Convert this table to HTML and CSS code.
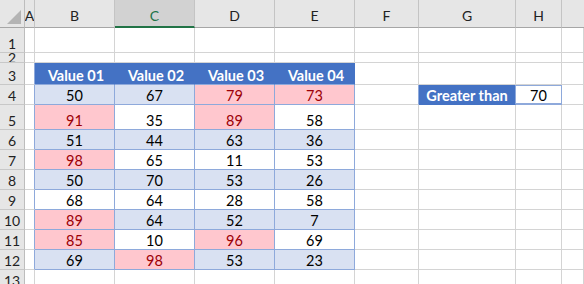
FILE: index.html
```html
<!DOCTYPE html>
<html lang="en">
<head>
  <meta charset="UTF-8" />
  <title>Greater than</title>
  <link rel="stylesheet" href="styles.css">
</head>
<body>
  <div class="sheet">
    <!-- column headers -->
    <div class="corner"><span class="tri"></span></div>
    <div class="ch">A</div>
    <div class="ch">B</div>
    <div class="ch sel">C</div>
    <div class="ch">D</div>
    <div class="ch">E</div>
    <div class="ch">F</div>
    <div class="ch">G</div>
    <div class="ch">H</div>
    <div class="ch last"></div>

    <!-- 1 -->
    <div class="rh">1</div>
    <div class="c"></div><div class="c"></div><div class="c"></div><div class="c"></div>
    <div class="c"></div><div class="c"></div><div class="c"></div><div class="c"></div><div class="c"></div>

    <!-- 2 -->
    <div class="rh short">2</div>
    <div class="c"></div><div class="c"></div><div class="c"></div><div class="c"></div>
    <div class="c"></div><div class="c"></div><div class="c"></div><div class="c"></div><div class="c"></div>

    <!-- 3 -->
    <div class="rh">3</div>
    <div class="c edge"></div>
    <div class="c th">Value 01</div>
    <div class="c th">Value 02</div>
    <div class="c th">Value 03</div>
    <div class="c th">Value 04</div>
    <div class="c"></div><div class="c"></div><div class="c"></div><div class="c"></div>

    <!-- 4 -->
    <div class="rh">4</div>
    <div class="c edge"></div>
    <div class="c td band">50</div>
    <div class="c td band">67</div>
    <div class="c td hi">79</div>
    <div class="c td hi">73</div>
    <div class="c pre"></div>
    <div class="c th lbl">Greater than</div>
    <div class="c td crit">70</div>
    <div class="c"></div>

    <!-- 5 -->
    <div class="rh">5</div>
    <div class="c edge"></div>
    <div class="c td hi">91</div>
    <div class="c td">35</div>
    <div class="c td hi">89</div>
    <div class="c td">58</div>
    <div class="c"></div><div class="c"></div><div class="c"></div><div class="c"></div>

    <!-- 6 -->
    <div class="rh">6</div>
    <div class="c edge"></div>
    <div class="c td band">51</div>
    <div class="c td band">44</div>
    <div class="c td band">63</div>
    <div class="c td band">36</div>
    <div class="c"></div><div class="c"></div><div class="c"></div><div class="c"></div>

    <!-- 7 -->
    <div class="rh">7</div>
    <div class="c edge"></div>
    <div class="c td hi">98</div>
    <div class="c td">65</div>
    <div class="c td">11</div>
    <div class="c td">53</div>
    <div class="c"></div><div class="c"></div><div class="c"></div><div class="c"></div>

    <!-- 8 -->
    <div class="rh">8</div>
    <div class="c edge"></div>
    <div class="c td band">50</div>
    <div class="c td band">70</div>
    <div class="c td band">53</div>
    <div class="c td band">26</div>
    <div class="c"></div><div class="c"></div><div class="c"></div><div class="c"></div>

    <!-- 9 -->
    <div class="rh">9</div>
    <div class="c edge"></div>
    <div class="c td">68</div>
    <div class="c td">64</div>
    <div class="c td">28</div>
    <div class="c td">58</div>
    <div class="c"></div><div class="c"></div><div class="c"></div><div class="c"></div>

    <!-- 10 -->
    <div class="rh">10</div>
    <div class="c edge"></div>
    <div class="c td hi">89</div>
    <div class="c td band">64</div>
    <div class="c td band">52</div>
    <div class="c td band">7</div>
    <div class="c"></div><div class="c"></div><div class="c"></div><div class="c"></div>

    <!-- 11 -->
    <div class="rh">11</div>
    <div class="c edge"></div>
    <div class="c td hi">85</div>
    <div class="c td">10</div>
    <div class="c td hi">96</div>
    <div class="c td">69</div>
    <div class="c"></div><div class="c"></div><div class="c"></div><div class="c"></div>

    <!-- 12 -->
    <div class="rh">12</div>
    <div class="c edge"></div>
    <div class="c td band">69</div>
    <div class="c td hi">98</div>
    <div class="c td band">53</div>
    <div class="c td band">23</div>
    <div class="c"></div><div class="c"></div><div class="c"></div><div class="c"></div>

    <!-- 13 -->
    <div class="rh">13</div>
    <div class="c"></div><div class="c"></div><div class="c"></div><div class="c"></div>
    <div class="c"></div><div class="c"></div><div class="c"></div><div class="c"></div><div class="c"></div>
  </div>
</body>
</html>
```

FILE: styles.css
```css
body {
  margin: 0;
  background: #ffffff;
  font-family: Lato, "Liberation Sans", sans-serif;
  color: #000000;
  overflow: hidden;
}

.sheet {
  display: grid;
  grid-template-columns: 25px 10px 80px 80px 80px 80px 64px 97px 46px 1fr;
  grid-template-rows: 28px 25px 10px 22px 20px 25px repeat(7, 20px) 20px;
  width: 584px;
  height: 284px;
  overflow: hidden;
}

.sheet > div {
  box-sizing: border-box;
  display: flex;
  align-items: flex-end;
  justify-content: center;
  overflow: hidden;
  white-space: nowrap;
  line-height: 16px;
}

/* headers */
.corner {
  position: relative;
  background: #e6e6e6;
  border-right: 1px solid #bdbdbd;
  border-bottom: 1px solid #a6a6a6;
}

.tri {
  position: absolute;
  right: 3px;
  bottom: 3px;
  width: 14px;
  height: 14px;
  background: #b4b4b4;
  clip-path: polygon(100% 0, 100% 100%, 0 100%);
}

.ch {
  background: #e6e6e6;
  border-right: 1px solid #c4c4c4;
  border-bottom: 1px solid #a6a6a6;
  font-size: 14px;
  color: #222222;
  padding-bottom: 3px;
}

.ch.sel {
  background: #d2d2d2;
  color: #217346;
  border-bottom: 2px solid #217346;
  padding-bottom: 2px;
}

.ch.last {
  border-right: none;
}

.rh {
  background: #e6e6e6;
  border-right: 1px solid #bdbdbd;
  border-bottom: 1px solid #c8c8c8;
  font-size: 14px;
  color: #222222;
}

.rh.short {
  line-height: 10px;
  align-items: flex-start;
}

/* cells */
.c {
  border-right: 1px solid #d4d4d4;
  border-bottom: 1px solid #d4d4d4;
  font-size: 14.5px;
}

.c.edge,
.c.pre {
  border-right-color: #8ea9db;
}

.th {
  background: #4472c4;
  color: #ffffff;
  font-weight: bold;
  justify-content: flex-start;
  padding-left: 3px;
  border-right-color: #4472c4;
  border-bottom-color: #8ea9db;
}

.th.lbl {
  justify-content: center;
  padding-left: 0;
  border-bottom-color: #4472c4;
  border-right-color: #8ea9db;
}

.td {
  border-right-color: #8ea9db;
  border-bottom-color: #8ea9db;
}

.td.band {
  background: #d9e1f2;
}

.td.hi {
  background: #ffc7ce;
  color: #9c0006;
}

.td.crit {
  box-shadow: inset 0 -1px 0 #8ea9db, inset 0 1px 0 #8ea9db;
}
```
